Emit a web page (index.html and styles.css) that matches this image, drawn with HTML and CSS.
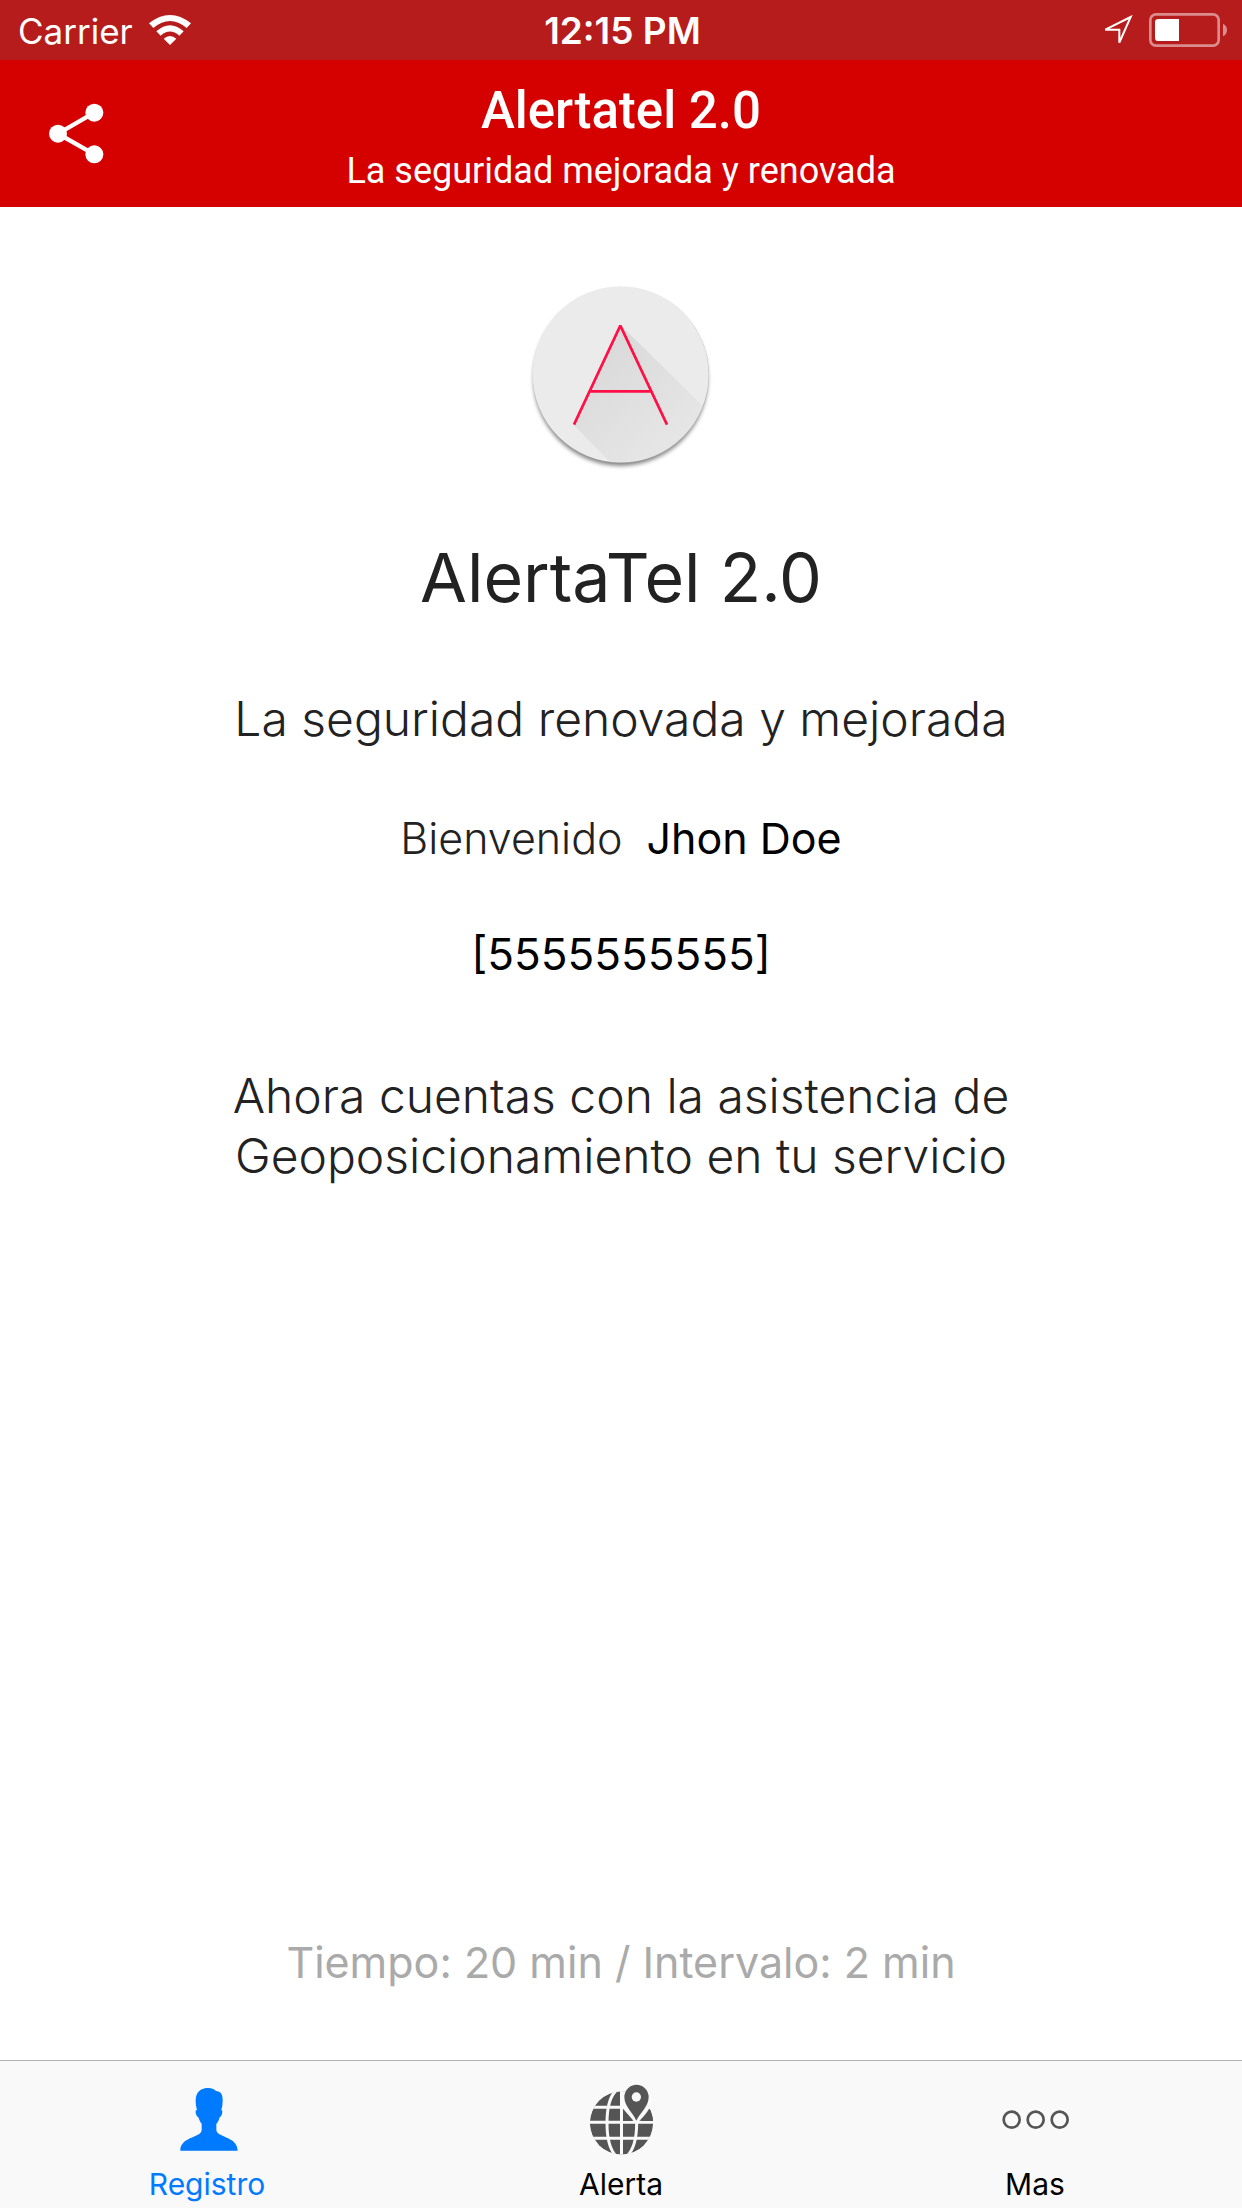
FILE: index.html
```html
<!DOCTYPE html>
<html lang="es">
<head>
  <meta charset="utf-8">
  <meta name="viewport" content="width=device-width, initial-scale=1">
  <title>Alertatel 2.0</title>
  <link rel="stylesheet" href="styles.css">
</head>
<body class="app">
  <div class="status">
    <div class="status-side">
      <span class="carrier">Carrier</span>
      <svg class="wifi" viewBox="450 42 126 96" aria-hidden="true">
        <path d="M450 70Q513 20 576 70L563 84Q513 42 463 84Z"/>
        <path d="M472 94Q513 57 554 94L541 107Q513 82 485 107Z"/>
        <path d="M494 116Q513 100 532 116L513 135Z"/>
      </svg>
    </div>
    <time class="clock">12:15 PM</time>
    <div class="status-side status-end">
      <svg class="locate" viewBox="123 45 93 93" aria-hidden="true">
        <path d="M209 51L133 89H175V128Z"/>
      </svg>
      <svg class="battery" viewBox="267 39 234 102" aria-hidden="true">
        <rect class="battery-case" x="271" y="43" width="205" height="94" rx="17"/>
        <path class="battery-tip" d="M489 71Q501 77 501 90T489 109Z"/>
        <path d="M295 57H357V123H295Q285 123 285 113V67Q285 57 295 57Z"/>
      </svg>
    </div>
  </div>

  <header class="header">
    <button class="share" type="button" aria-label="Compartir">
      <svg class="share-icon" viewBox="147 309 165 183" aria-hidden="true">
        <path class="share-line" d="M283 338L174 401L283 463"/>
        <circle cx="283" cy="338" r="27"/>
        <circle cx="174" cy="401" r="27"/>
        <circle cx="283" cy="463" r="27"/>
      </svg>
    </button>
    <div class="titles">
      <div class="title">Alertatel 2.0</div>
      <div class="subtitle">La seguridad mejorada y renovada</div>
    </div>
  </header>

  <main class="main">
    <svg class="logo" viewBox="3 0 660 660" aria-hidden="true">
      <defs>
        <linearGradient id="shade" gradientUnits="userSpaceOnUse" x1="280" y1="250" x2="480" y2="500">
          <stop offset="0" stop-color="#dadada"/>
          <stop offset="1" stop-color="#e5e5e5"/>
        </linearGradient>
        <filter id="soft" x="-10%" y="-10%" width="120%" height="120%">
          <feGaussianBlur stdDeviation="7"/>
        </filter>
        <clipPath id="disc"><circle cx="332" cy="313" r="263"/></clipPath>
      </defs>
      <circle cx="332" cy="326" r="261" fill="#000" opacity=".5" filter="url(#soft)"/>
      <circle cx="333" cy="315" r="264" fill="#b5b5b5"/>
      <circle cx="332" cy="313" r="264" fill="#ebebeb"/>
      <path d="M332 166L632 460V660H384L190 464Z" fill="url(#shade)" clip-path="url(#disc)"/>
      <path d="M192 464L331 167L471 464M241 364H423" fill="none" stroke="#ff0f45" stroke-width="8" stroke-linejoin="bevel"/>
    </svg>
    <h1 class="name">AlertaTel 2.0</h1>
    <p class="slogan">La seguridad renovada y mejorada</p>
    <p class="welcome"><span>Bienvenido</span><strong class="user">Jhon Doe</strong></p>
    <p class="phone">[5555555555]</p>
    <p class="notice">Ahora cuentas con la asistencia de<br>Geoposicionamiento en tu servicio</p>
    <p class="timing">Tiempo: 20 min / Intervalo: 2 min</p>
  </main>

  <nav class="tabs">
    <a class="tab tab-active" href="#registro" aria-current="page">
      <svg class="tab-icon" viewBox="126 78 270 270" aria-hidden="true">
        <path d="M181 302C181 270 215 265 238 252Q245 248 245 240V222C239 215 237 206 235 202C229 198 226 190 227 182L231 179C227 165 225 146 230 134C237 116 257 113 268 114C278 115 284 119 288 123C302 123 309 134 308 153Q308 168 304 180L307 183C307 191 305 198 299 202C297 210 294 217 289 222V240Q289 248 297 252C321 265 352 270 353 302Z"/>
      </svg>
      <span>Registro</span>
    </a>
    <a class="tab" href="#alerta">
      <svg class="tab-icon" viewBox="78 78 270 270" aria-hidden="true">
        <defs><clipPath id="globe"><circle cx="214.500" cy="219" r="95"/></clipPath></defs>
        <g clip-path="url(#globe)">
          <circle cx="214.500" cy="219" r="95"/>
          <path class="grid" d="M214.500 120V320M115 172H315M115 217H315M115 265H315"/>
          <path class="grid" d="M200 120Q171 145 171 219T200 320M229 120Q260 145 260 219T229 320"/>
          <path class="cut" d="M211 110H320V177H302L259 222L211 167Z"/>
          <path d="M219 177L247 213H219Z"/>
          <path d="M297 177H312V213H273Z"/>
        </g>
        <path d="M259 212C251 191 223 169 223 141A36.500 36.500 0 0 1 296 141C296 169 269 191 259 212Z"/>
        <circle class="cut" cx="259" cy="141" r="14"/>
      </svg>
      <span>Alerta</span>
    </a>
    <a class="tab" href="#mas">
      <svg class="tab-icon" viewBox="60 78 270 270" aria-hidden="true">
        <g class="dots">
          <circle cx="125" cy="209" r="24"/>
          <circle cx="197" cy="209" r="24"/>
          <circle cx="269" cy="209" r="24"/>
        </g>
      </svg>
      <span>Mas</span>
    </a>
  </nav>
</body>
</html>
```
FILE: styles.css
```css
* {
  box-sizing: border-box;
}

.app {
  display: flex;
  flex-direction: column;
  min-height: 100vh;
  margin: 0;
  background: #fff;
  color: #222;
  font-family: Inter, "Liberation Sans", sans-serif;
}

/* Status bar */
.status {
  display: grid;
  grid-template-columns: 1fr auto 1fr;
  align-items: center;
  padding: 0 15px 0 18px;
  background: #b71c1c;
  color: #fff;
  line-height: 58px;
}

.status svg {
  fill: currentColor;
}

.status-side {
  display: flex;
  align-items: center;
  gap: 16px;
}

.status-end {
  justify-content: flex-end;
}

.carrier {
  padding-top: 2px;
  font-size: 35px;
}

.clock {
  padding-top: 2px;
  font-size: 37px;
  font-weight: 600;
}

.wifi {
  width: 42px;
  height: 32px;
}

.status .locate {
  width: 31px;
  height: 31px;
  fill: none;
  stroke: currentColor;
  stroke-width: 6;
}

.battery {
  width: 78px;
  height: 34px;
}

.status .battery-case {
  fill: none;
  stroke: #db8d8d;
  stroke-width: 8;
}

.status .battery-tip {
  fill: #db8d8d;
}

/* Title bar */
.header {
  display: grid;
  grid-template-columns: 1fr auto 1fr;
  align-items: start;
  padding: 21px 49px 14px;
  background: #d50000;
  color: #fff;
  font-family: Roboto, sans-serif;
  text-align: center;
}

.share {
  justify-self: start;
  display: flex;
  padding: 22px 0 0;
  border: 0;
  background: none;
  color: inherit;
}

.share-icon {
  width: 55px;
  height: 61px;
  fill: currentColor;
}

.share-line {
  fill: none;
  stroke: currentColor;
  stroke-width: 13;
}

.titles {
  display: grid;
  gap: 8px;
}

.title {
  font-size: 51px;
  font-weight: 500;
  line-height: 60px;
}

.subtitle {
  font-size: 36px;
  line-height: 44px;
}

/* Content */
.main {
  flex: 1;
  display: flex;
  flex-direction: column;
  align-items: center;
  padding: 63px 40px 68px;
  text-align: center;
  line-height: 60px;
}

.main p {
  margin: 0;
}

.logo {
  width: 220px;
  height: 220px;
}

.name {
  margin: 43px 0 68px;
  font-size: 68px;
  font-weight: 400;
  line-height: 88px;
}

.slogan,
.notice {
  font-size: 48px;
  font-weight: 300;
}

.main .welcome {
  display: flex;
  gap: 24px;
  margin: 59px 0 56px;
  font-size: 43px;
  font-weight: 300;
}

.user {
  color: #000;
  font-weight: 400;
}

.phone {
  color: #000;
  font-size: 44px;
}

.main .notice {
  margin-top: 82px;
}

.main .timing {
  margin-top: auto;
  color: #aaa;
  font-size: 43px;
}

/* Tab bar */
.tabs {
  display: grid;
  grid-template-columns: repeat(3, 1fr);
  padding: 15px 0 6px;
  border-top: 1px solid #b2b2b2;
  background: #f9f9f9;
}

.tab {
  display: flex;
  flex-direction: column;
  align-items: center;
  color: #000;
  font-size: 30px;
  line-height: 36px;
  text-decoration: none;
}

.tab-active {
  color: #007aff;
}

.tab-icon {
  width: 90px;
  height: 90px;
  fill: #555;
}

.tab-active .tab-icon {
  fill: currentColor;
}

.tab-icon .grid {
  fill: none;
  stroke: #f9f9f9;
  stroke-width: 9;
}

.tab-icon .cut {
  fill: #f9f9f9;
}

.dots {
  fill: none;
  stroke: #555;
  stroke-width: 8;
}
```
